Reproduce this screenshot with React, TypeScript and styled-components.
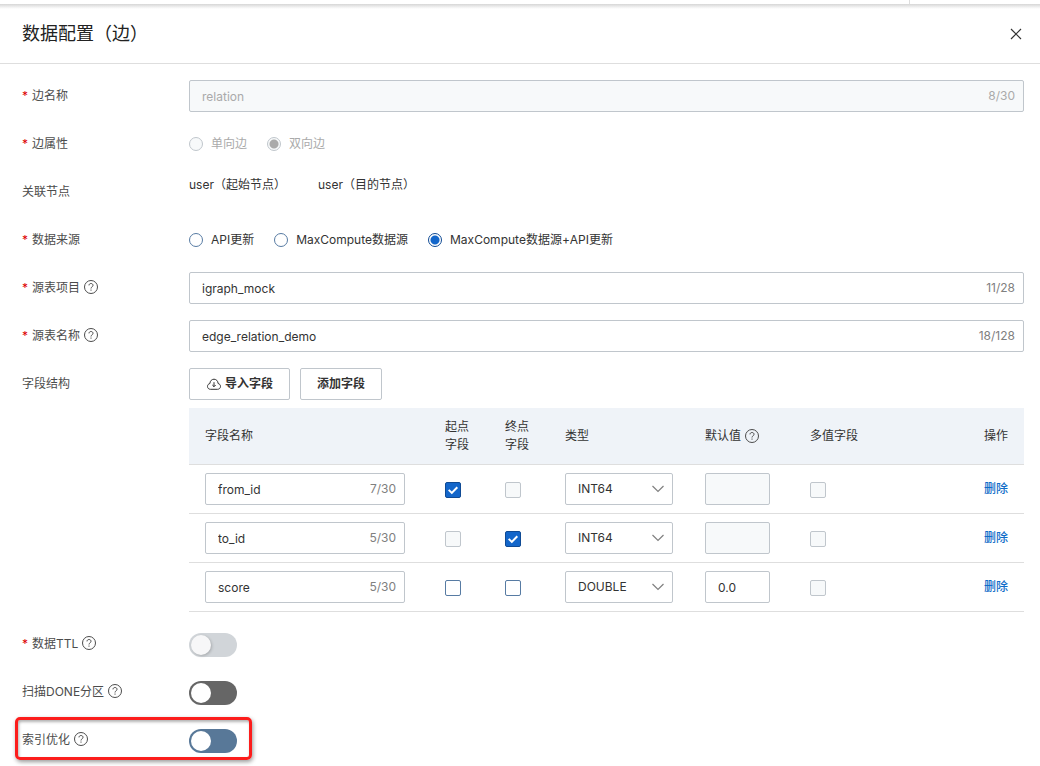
import React, { useId, useState } from 'react';
import styled, { createGlobalStyle, css } from 'styled-components';

const GlobalStyle = createGlobalStyle`
  *, *::before, *::after { box-sizing: border-box; }
  body {
    margin: 0;
    background: #fff;
    color: #333;
    font-family: Inter, "Noto Sans CJK SC", sans-serif;
    font-size: 12px;
    line-height: 18px;
  }
  button, input, select { font: inherit; color: inherit; margin: 0; }
`;

const Page = styled.div`
  min-height: 100vh;
  display: flex;
  flex-direction: column;
`;

const Backdrop = styled.div`
  height: 4px;
  display: grid;
  grid-template-columns: 1fr 131px;
`;

const BackdropPane = styled.div`
  & + & { border-left: 1px solid #dedede; }
`;

const Drawer = styled.section`
  flex: 1;
  background: linear-gradient(#d6d6d6, #f0f0f0 3px, #fff 5px);
`;

const Header = styled.header`
  display: flex;
  align-items: center;
  justify-content: space-between;
  height: 60px;
  padding: 0 16px 0 22px;
  border-bottom: 1px solid #dedede;
`;

const Title = styled.h1`
  margin: 0;
  font-size: 18px;
  line-height: 28px;
  font-weight: 400;
  color: #222;
`;

const CloseButton = styled.button`
  display: flex;
  padding: 2px;
  border: 0;
  background: none;
  color: #333;
  cursor: pointer;
`;

const Form = styled.form`
  display: flex;
  flex-direction: column;
  gap: 16px;
  padding: 16px 16px 10px 22px;
`;

const Row = styled.div<{ $highlight?: boolean }>`
  position: relative;
  display: grid;
  grid-template-columns: 167px minmax(0, 1fr);
  min-height: 32px;
  ${(p) =>
    p.$highlight &&
    css`
      &::after {
        content: '';
        position: absolute;
        left: -7px;
        top: -7px;
        width: 237px;
        height: 43px;
        border: 3px solid #fc1d1c;
        border-radius: 5px;
        box-shadow: 1px 2px 4px rgba(0, 0, 0, 0.4), inset 1px 2px 3px rgba(0, 0, 0, 0.3);
        pointer-events: none;
      }
    `}
`;

const LabelCell = styled.div`
  display: flex;
  align-items: center;
  gap: 4px;
  height: 32px;
  color: #4c4c4c;
  svg { margin-bottom: 2px; }
`;

const Star = styled.span`
  width: 6px;
  color: #d00;
`;

const Control = styled.div<{ $gap?: number }>`
  display: flex;
  align-items: center;
  gap: ${(p) => p.$gap ?? 0}px;
`;

const NodeNames = styled.div`
  display: flex;
  gap: 32px;
`;

const Field = styled.div<{ $width?: string }>`
  position: relative;
  display: flex;
  width: ${(p) => p.$width ?? '100%'};
`;

const TextInput = styled.input`
  width: 100%;
  height: 32px;
  padding: 1px 12px 0;
  border: 1px solid #c0c6cc;
  border-radius: 2px;
  background: #fff;
  outline: none;
  &:disabled { background: #f7f9fa; color: #aaa; }
`;

const Counter = styled.span<{ $muted?: boolean }>`
  position: absolute;
  right: 9px;
  top: 7px;
  color: ${(p) => (p.$muted ? '#aaa' : '#808080')};
`;

const RadioLabel = styled.label<{ $disabled?: boolean }>`
  display: flex;
  align-items: center;
  gap: 8px;
  color: ${(p) => (p.$disabled ? '#aaa' : '#333')};
`;

const Radio = styled.input`
  appearance: none;
  width: 14px;
  height: 14px;
  border: 1px solid #577ba3;
  border-radius: 50%;
  background: #fff;
  &:checked {
    border-color: #0f4a94;
    background: radial-gradient(circle, #1366ca 0 4px, #fff 5px);
  }
  &:disabled { border-color: #c0c6cc; background: #f7f9fa; }
  &:checked:disabled { background: radial-gradient(circle, #aaa 0 4px, #f7f9fa 5px); }
`;

const Button = styled.button`
  display: flex;
  align-items: center;
  gap: 4px;
  height: 32px;
  padding: 0 16px;
  border: 1px solid #c0c6cc;
  border-radius: 2px;
  background: #fff;
  font-weight: 600;
  cursor: pointer;
`;

const Structure = styled.div`
  display: flex;
  flex-direction: column;
  gap: 8px;
`;

const Table = styled.table`
  width: 100%;
  table-layout: fixed;
  border-collapse: separate;
  border-spacing: 0;
`;

const HeadCell = styled.th<{ $width?: number }>`
  width: ${(p) => (p.$width ? `${p.$width}px` : 'auto')};
  height: 57px;
  padding: 0 16px;
  background: #eff3f8;
  border-bottom: 1px solid #dedede;
  font-weight: 400;
  text-align: left;
`;

const HeadContent = styled.span`
  display: flex;
  align-items: center;
  gap: 4px;
`;

const Cell = styled.td`
  height: 49px;
  padding: 8px 16px;
  border-bottom: 1px solid #dedede;
`;

const SelectWrap = styled.div`
  position: relative;
  width: 108px;
  svg {
    position: absolute;
    right: 8px;
    top: 9px;
    pointer-events: none;
  }
`;

const Select = styled.select`
  appearance: none;
  display: block;
  width: 100%;
  height: 32px;
  padding: 0 28px 0 12px;
  border: 1px solid #c0c6cc;
  border-radius: 2px;
  background: #fff;
`;

const CheckWrap = styled.span`
  position: relative;
  display: flex;
  padding-top: 2px;
  svg {
    position: absolute;
    left: 0;
    top: 2px;
    pointer-events: none;
  }
`;

const Checkbox = styled.input`
  appearance: none;
  width: 16px;
  height: 16px;
  border: 1px solid #577ba3;
  border-radius: 2px;
  background: #fff;
  &:checked { border-color: #0f4a94; background: #1366ca; }
  &:disabled { border-color: #c0c6cc; background: #f7f9fa; }
`;

const DeleteLink = styled.a`
  color: #0f6cc8;
  font-weight: 500;
  text-decoration: none;
`;

const Switch = styled.input<{ $track: string }>`
  appearance: none;
  position: relative;
  width: 48px;
  height: 24px;
  margin-top: 2px;
  border-radius: 12px;
  background: ${(p) => p.$track};
  &::before {
    content: '';
    position: absolute;
    left: 2px;
    top: 2px;
    width: 20px;
    height: 20px;
    border-radius: 50%;
    background: #fff;
  }
  &:checked::before { left: 26px; }
  &:disabled::before { background: #f7f7f8; box-shadow: 1px 1px 3px rgba(0, 0, 0, 0.2); }
`;

const HelpIcon = () => (
  <svg width="14" height="14" viewBox="0 0 14 14" fill="none" stroke="#4c4c4c" aria-hidden="true">
    <circle cx="7" cy="7" r="6.5" />
    <path d="M5 5.4C5 4.200 5.800 3.500 7 3.500s2 .7 2 1.800c0 1.600-2 1.500-2 3.200" />
    <path d="M7 9.500v1.200" />
  </svg>
);

const CloudIcon = () => (
  <svg width="15" height="14" viewBox="0 0 15 14" fill="none" stroke="#333" aria-hidden="true">
    <path d="M4.500 12.300C2.600 12.300 1.500 11 1.500 9.400c0-1.500 1-2.600 2.400-2.900C4 3.900 5.800 2.200 8 2.200s4 1.700 4.100 4.300c1.400.300 2.400 1.400 2.400 2.900 0 1.600-1.200 2.900-3 2.900z" />
    <path d="M8 5.200v4.500M6.300 8L8 9.700 9.700 8" />
  </svg>
);

const ChevronIcon = () => (
  <svg width="14" height="14" viewBox="0 0 14 14" fill="none" stroke="#808080" strokeWidth="1.2" aria-hidden="true">
    <path d="M1.500 4L7 9.500 12.500 4" />
  </svg>
);

const TickIcon = () => (
  <svg width="16" height="16" viewBox="0 0 16 16" fill="none" stroke="#fff" strokeWidth="2" aria-hidden="true">
    <path d="M3.700 7.900L6.800 10.900 12.300 5.200" />
  </svg>
);

type RowProps = {
  label: string;
  htmlFor?: string;
  required?: boolean;
  help?: boolean;
  highlight?: boolean;
  children: React.ReactNode;
};

function FormRow({ label, htmlFor, required, help, highlight, children }: RowProps) {
  return (
    <Row $highlight={highlight}>
      <LabelCell>
        {required && <Star>*</Star>}
        {htmlFor ? <label htmlFor={htmlFor}>{label}</label> : <span>{label}</span>}
        {help && <HelpIcon />}
      </LabelCell>
      {children}
    </Row>
  );
}

type CountedProps = { id?: string; label?: string; value: string; count: string; disabled?: boolean; width?: string };

function CountedInput({ id, label, value, count, disabled, width }: CountedProps) {
  return (
    <Field $width={width}>
      <TextInput id={id} aria-label={label} defaultValue={value} disabled={disabled} />
      <Counter $muted={disabled}>{count}</Counter>
    </Field>
  );
}

type RadioProps = { name: string; label: string; checked?: boolean; disabled?: boolean };

function RadioOption({ name, label, checked, disabled }: RadioProps) {
  const id = useId();
  return (
    <RadioLabel htmlFor={id} $disabled={disabled}>
      <Radio id={id} type="radio" name={name} defaultChecked={checked} disabled={disabled} />
      {label}
    </RadioLabel>
  );
}

type CheckProps = { label: string; checked?: boolean; disabled?: boolean };

function Check({ label, checked = false, disabled }: CheckProps) {
  const [on, setOn] = useState(checked);
  return (
    <CheckWrap>
      <Checkbox
        type="checkbox"
        aria-label={label}
        checked={on}
        disabled={disabled}
        onChange={(e) => setOn(e.target.checked)}
      />
      {on && <TickIcon />}
    </CheckWrap>
  );
}

const fields = [
  { name: 'from_id', count: '7/30', start: true, end: false, type: 'INT64', value: '', lockStart: false, lockEnd: true },
  { name: 'to_id', count: '5/30', start: false, end: true, type: 'INT64', value: '', lockStart: true, lockEnd: false },
  { name: 'score', count: '5/30', start: false, end: false, type: 'DOUBLE', value: '0.0', lockStart: false, lockEnd: false },
];

export default function App() {
  return (
    <Page>
      <GlobalStyle />
      <Backdrop>
        <BackdropPane />
        <BackdropPane />
      </Backdrop>
      <Drawer>
        <Header>
          <Title>数据配置（边）</Title>
          <CloseButton type="button" aria-label="关闭">
            <svg width="12" height="12" viewBox="0 0 12 12" fill="none" stroke="currentColor" strokeWidth="1.200">
              <path d="M1 1l10 10M11 1L1 11" />
            </svg>
          </CloseButton>
        </Header>
        <Form onSubmit={(e) => e.preventDefault()}>
          <FormRow label="边名称" htmlFor="edge-name" required>
            <CountedInput id="edge-name" value="relation" count="8/30" disabled />
          </FormRow>
          <FormRow label="边属性" required>
            <Control $gap={20} role="radiogroup" aria-label="边属性">
              <RadioOption name="direction" label="单向边" disabled />
              <RadioOption name="direction" label="双向边" checked disabled />
            </Control>
          </FormRow>
          <FormRow label="关联节点">
            <NodeNames>
              <span>user（起始节点）</span>
              <span>user（目的节点）</span>
            </NodeNames>
          </FormRow>
          <FormRow label="数据来源" required>
            <Control $gap={20} role="radiogroup" aria-label="数据来源">
              <RadioOption name="source" label="API更新" />
              <RadioOption name="source" label="MaxCompute数据源" />
              <RadioOption name="source" label="MaxCompute数据源+API更新" checked />
            </Control>
          </FormRow>
          <FormRow label="源表项目" htmlFor="project" required help>
            <CountedInput id="project" value="igraph_mock" count="11/28" />
          </FormRow>
          <FormRow label="源表名称" htmlFor="table-name" required help>
            <CountedInput id="table-name" value="edge_relation_demo" count="18/128" />
          </FormRow>
          <FormRow label="字段结构">
            <Structure>
              <Control $gap={10}>
                <Button type="button">
                  <CloudIcon />
                  导入字段
                </Button>
                <Button type="button">添加字段</Button>
              </Control>
              <Table>
                <thead>
                  <tr>
                    <HeadCell $width={240}>字段名称</HeadCell>
                    <HeadCell $width={60}>起点字段</HeadCell>
                    <HeadCell $width={60}>终点字段</HeadCell>
                    <HeadCell $width={140}>类型</HeadCell>
                    <HeadCell $width={105}>
                      <HeadContent>
                        默认值
                        <HelpIcon />
                      </HeadContent>
                    </HeadCell>
                    <HeadCell>多值字段</HeadCell>
                    <HeadCell $width={56}>操作</HeadCell>
                  </tr>
                </thead>
                <tbody>
                  {fields.map((f) => (
                    <tr key={f.name}>
                      <Cell>
                        <CountedInput label="字段名称" value={f.name} count={f.count} width="200px" />
                      </Cell>
                      <Cell>
                        <Check label="起点字段" checked={f.start} disabled={f.lockStart} />
                      </Cell>
                      <Cell>
                        <Check label="终点字段" checked={f.end} disabled={f.lockEnd} />
                      </Cell>
                      <Cell>
                        <SelectWrap>
                          <Select aria-label="类型" defaultValue={f.type}>
                            <option>INT64</option>
                            <option>DOUBLE</option>
                          </Select>
                          <ChevronIcon />
                        </SelectWrap>
                      </Cell>
                      <Cell>
                        <Field $width="65px">
                          <TextInput aria-label="默认值" defaultValue={f.value} disabled={!f.value} />
                        </Field>
                      </Cell>
                      <Cell>
                        <Check label="多值字段" disabled />
                      </Cell>
                      <Cell>
                        <DeleteLink href="#">删除</DeleteLink>
                      </Cell>
                    </tr>
                  ))}
                </tbody>
              </Table>
            </Structure>
          </FormRow>
          <FormRow label="数据TTL" htmlFor="ttl" required help>
            <Control>
              <Switch id="ttl" type="checkbox" role="switch" disabled $track="#d1d5d9" />
            </Control>
          </FormRow>
          <FormRow label="扫描DONE分区" htmlFor="done" help>
            <Control>
              <Switch id="done" type="checkbox" role="switch" $track="#666" />
            </Control>
          </FormRow>
          <FormRow label="索引优化" htmlFor="index" help highlight>
            <Control>
              <Switch id="index" type="checkbox" role="switch" $track="#587898" />
            </Control>
          </FormRow>
        </Form>
      </Drawer>
    </Page>
  );
}
